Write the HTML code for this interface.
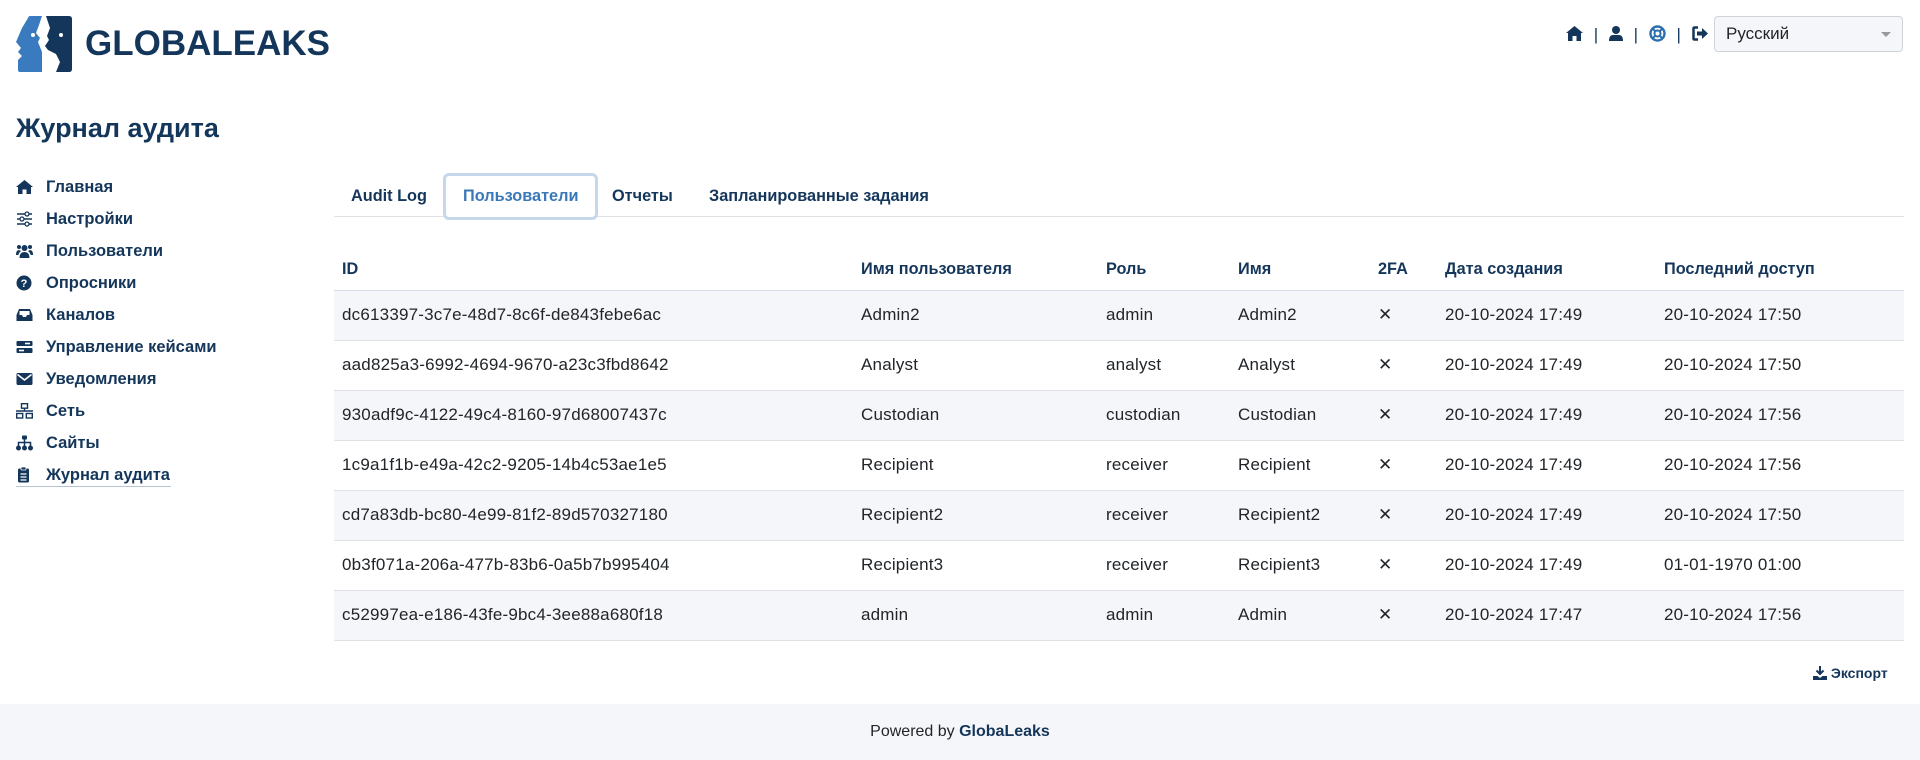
<!DOCTYPE html>
<html><head><meta charset="utf-8">
<style>
*{box-sizing:border-box;margin:0;padding:0}
body{width:1920px;height:760px;overflow:hidden;background:#fff;font-family:"Liberation Sans",sans-serif;color:#212529;position:relative}
.abs{position:absolute}
.navy{color:#14365a}
.side div{position:absolute;left:16px;height:32px;line-height:32px;font-weight:bold;font-size:16.5px;color:#14365a;white-space:nowrap}
.side svg{position:absolute;left:0;top:8px;width:17px;height:16px}
.side span{position:absolute;left:30px}
.tab{position:absolute;top:184px;font-weight:bold;font-size:16.3px;color:#14365a;line-height:24px}
table{position:absolute;left:334px;top:250px;width:1570px;border-collapse:collapse;font-size:17px;letter-spacing:.2px}
td,th{height:50px;padding:0 8px;text-align:left;vertical-align:middle;border-bottom:1px solid #dee2e6;white-space:nowrap}
th{height:40px;font-weight:bold;color:#14365a;border-bottom:1px solid #d5dde8;vertical-align:middle;font-size:16.3px;letter-spacing:0}
tr.g td{background:#f5f6fa}
</style></head><body>
<svg class="abs" style="left:16px;top:16px" width="56" height="56" viewBox="0 0 56 56">
<path d="M12,2 Q12,0 15,0 L26,0 L23,9 L20,17 L24,22 L22,26 L26,36 L26,56 L4,56 Q2,56 2,54 L2,44 L6,40 L2,36 L5,32 L0,26 L6,12 Z" fill="#3a7bbf"/>
<circle cx="17" cy="19" r="2" fill="#fff"/>
<path d="M30,0 L53,0 Q56,0 56,3 L56,53 Q56,56 53,56 L40,56 L44,46 L40,38 L32,34 L29,30 L33,24 L31,20 L34,12 Z" fill="#14365a"/>
<circle cx="45" cy="19" r="2" fill="#fff"/>
</svg>
<div class="abs" style="left:85px;top:23px;font-size:35px;font-weight:bold;color:#14365a;line-height:42px">GLOBALEAKS</div>

<div class="abs navy" style="left:1566px;top:24px;font-size:17px;line-height:22px;white-space:nowrap">
<svg width="17" height="15" viewBox="0 0 17 15" style="vertical-align:-1px"><path d="M8.5,0 L17,7 L15,7 L15,15 L10.5,15 L10.5,10 L6.5,10 L6.5,15 L2,15 L2,7 L0,7 Z" fill="#14365a"/></svg>
<span style="margin:0 6px">|</span>
<svg width="14" height="15" viewBox="0 0 14 15" style="vertical-align:-1px"><circle cx="7" cy="4" r="4" fill="#14365a"/><path d="M0,15 Q0,9 4,9 L10,9 Q14,9 14,15 Z" fill="#14365a"/></svg>
<span style="margin:0 6px">|</span>
<svg width="17" height="17" viewBox="0 0 17 17" style="vertical-align:-2px"><circle cx="8.5" cy="8.5" r="7" fill="none" stroke="#2c6fae" stroke-width="2.4"/><circle cx="8.5" cy="8.5" r="3" fill="none" stroke="#2c6fae" stroke-width="2"/><path d="M3.5,3.5 L6.5,6.5 M13.5,3.5 L10.5,6.5 M3.5,13.5 L6.5,10.5 M13.5,13.5 L10.5,10.5" stroke="#2c6fae" stroke-width="2"/></svg>
<span style="margin:0 6px">|</span>
<svg width="17" height="15" viewBox="0 0 17 15" style="vertical-align:-1px"><path d="M6,1.5 L2.5,1.5 Q1.5,1.5 1.5,2.5 L1.5,12.5 Q1.5,13.5 2.5,13.5 L6,13.5" fill="none" stroke="#14365a" stroke-width="2.5"/><path d="M5,5.5 L10,5.5 L10,2 L16,7.5 L10,13 L10,9.5 L5,9.5 Z" fill="#14365a"/></svg>
</div>
<div class="abs" style="left:1714px;top:16px;width:189px;height:36px;border:1px solid #ced4da;border-radius:4px;background:#f5f6fa;font-size:17px;line-height:34px;padding-left:11px;color:#212529">Русский
<div class="abs" style="right:11px;top:15px;width:0;height:0;border-left:5px solid transparent;border-right:5px solid transparent;border-top:5px solid #999"></div></div>

<div class="abs navy" style="left:16px;top:111px;font-size:27px;font-weight:bold;line-height:34px">Журнал аудита</div>

<div class="side">
<div style="top:171px"><svg viewBox="0 0 17 16"><path d="M8.5,1 L17,8 L15,8 L15,15 L10.5,15 L10.5,10.5 L6.5,10.5 L6.5,15 L2,15 L2,8 L0,8 Z" fill="#14365a"/></svg><span>Главная</span></div>
<div style="top:203px"><svg viewBox="0 0 17 16"><path d="M1,3H16M1,8H16M1,13H16" stroke="#14365a" stroke-width="1.5"/><circle cx="11" cy="3" r="2" fill="#fff" stroke="#14365a" stroke-width="1.3"/><circle cx="6" cy="8" r="2" fill="#fff" stroke="#14365a" stroke-width="1.3"/><circle cx="11" cy="13" r="2" fill="#fff" stroke="#14365a" stroke-width="1.3"/></svg><span>Настройки</span></div>
<div style="top:235px"><svg viewBox="0 0 17 16"><circle cx="8.5" cy="5" r="3" fill="#14365a"/><circle cx="3" cy="4" r="2" fill="#14365a"/><circle cx="14" cy="4" r="2" fill="#14365a"/><path d="M3.5,15 Q3.5,9 8.5,9 Q13.5,9 13.5,15Z M0,12 Q0,7 3,7 L5,8 Q2.5,10 2.5,12Z M17,12 Q17,7 14,7 L12,8 Q14.5,10 14.5,12Z" fill="#14365a"/></svg><span>Пользователи</span></div>
<div style="top:267px"><svg viewBox="0 0 17 16"><circle cx="8" cy="8" r="7.5" fill="#14365a"/><text x="8" y="12" font-size="11" font-weight="bold" fill="#fff" text-anchor="middle" font-family="Liberation Sans">?</text></svg><span>Опросники</span></div>
<div style="top:299px"><svg viewBox="0 0 17 16"><path d="M3,2 L14,2 L16.5,8 L16.5,14 L0.5,14 L0.5,8 Z" fill="#14365a"/><path d="M3.5,8 L3.5,4 L13.5,4 L13.5,8 L11,8 L10,10 L7,10 L6,8 Z" fill="#fff"/></svg><span>Каналов</span></div>
<div style="top:331px"><svg viewBox="0 0 17 16"><rect x="0.5" y="2" width="16" height="5" rx="1" fill="#14365a"/><rect x="0.5" y="9" width="16" height="5" rx="1" fill="#14365a"/><rect x="9" y="3.7" width="5" height="1.6" fill="#fff"/><rect x="3" y="10.7" width="5" height="1.6" fill="#fff"/></svg><span>Управление кейсами</span></div>
<div style="top:363px"><svg viewBox="0 0 17 16"><rect x="0.5" y="2" width="16" height="12" rx="1.5" fill="#14365a"/><path d="M1.5,3.5 L8.5,9 L15.5,3.5" fill="none" stroke="#fff" stroke-width="1.6"/></svg><span>Уведомления</span></div>
<div style="top:395px"><svg viewBox="0 0 17 16"><rect x="5.5" y="0.7" width="6" height="4.5" fill="none" stroke="#14365a" stroke-width="1.4"/><rect x="0.7" y="10.5" width="6" height="4.5" fill="none" stroke="#14365a" stroke-width="1.4"/><rect x="10.3" y="10.5" width="6" height="4.5" fill="none" stroke="#14365a" stroke-width="1.4"/><path d="M8.5,5 V8 M0,8 H17" stroke="#14365a" stroke-width="1.4"/></svg><span>Сеть</span></div>
<div style="top:427px"><svg viewBox="0 0 17 16"><rect x="6" y="0.5" width="5" height="4" rx="1" fill="#14365a"/><path d="M8.5,4 V11 M2.5,11 V7.5 H14.5 V11" fill="none" stroke="#14365a" stroke-width="1.5"/><circle cx="2.5" cy="13" r="2.5" fill="#14365a"/><circle cx="8.5" cy="13" r="2.5" fill="#14365a"/><circle cx="14.5" cy="13" r="2.5" fill="#14365a"/></svg><span>Сайты</span></div>
<div style="top:459px"><svg viewBox="0 0 17 16" style="left:1px"><rect x="1" y="1.5" width="11" height="14" rx="1.5" fill="#14365a"/><rect x="4" y="0" width="5" height="3" rx="1" fill="#14365a" stroke="#fff" stroke-width=".8"/><path d="M3.5,7H9.5M3.5,10H9.5M3.5,13H9.5" stroke="#fff" stroke-width="1.2"/></svg><span>Журнал аудита</span></div>
</div>
<div class="abs" style="left:16px;top:486px;width:155px;height:1px;background:#b9c4d2"></div>

<div class="abs" style="left:334px;top:216px;width:1570px;height:1px;background:#dee2e6"></div>
<div class="abs" style="left:443px;top:173px;width:155px;height:47px;border:3px solid #c5d7ea;border-radius:6px;background:#fff"></div>
<div class="tab" style="left:351px">Audit Log</div>
<div class="tab" style="left:463px;color:#3a78b8">Пользователи</div>
<div class="tab" style="left:612px">Отчеты</div>
<div class="tab" style="left:709px">Запланированные задания</div>

<table>
<colgroup><col style="width:519px"><col style="width:245px"><col style="width:132px"><col style="width:140px"><col style="width:67px"><col style="width:219px"><col></colgroup>
<tr><th>ID</th><th>Имя пользователя</th><th>Роль</th><th>Имя</th><th>2FA</th><th>Дата создания</th><th>Последний доступ</th></tr>
<tr class="g"><td>dc613397-3c7e-48d7-8c6f-de843febe6ac</td><td>Admin2</td><td>admin</td><td>Admin2</td><td>✕</td><td>20-10-2024 17:49</td><td>20-10-2024 17:50</td></tr>
<tr><td>aad825a3-6992-4694-9670-a23c3fbd8642</td><td>Analyst</td><td>analyst</td><td>Analyst</td><td>✕</td><td>20-10-2024 17:49</td><td>20-10-2024 17:50</td></tr>
<tr class="g"><td>930adf9c-4122-49c4-8160-97d68007437c</td><td>Custodian</td><td>custodian</td><td>Custodian</td><td>✕</td><td>20-10-2024 17:49</td><td>20-10-2024 17:56</td></tr>
<tr><td>1c9a1f1b-e49a-42c2-9205-14b4c53ae1e5</td><td>Recipient</td><td>receiver</td><td>Recipient</td><td>✕</td><td>20-10-2024 17:49</td><td>20-10-2024 17:56</td></tr>
<tr class="g"><td>cd7a83db-bc80-4e99-81f2-89d570327180</td><td>Recipient2</td><td>receiver</td><td>Recipient2</td><td>✕</td><td>20-10-2024 17:49</td><td>20-10-2024 17:50</td></tr>
<tr><td>0b3f071a-206a-477b-83b6-0a5b7b995404</td><td>Recipient3</td><td>receiver</td><td>Recipient3</td><td>✕</td><td>20-10-2024 17:49</td><td>01-01-1970 01:00</td></tr>
<tr class="g"><td>c52997ea-e186-43fe-9bc4-3ee88a680f18</td><td>admin</td><td>admin</td><td>Admin</td><td>✕</td><td>20-10-2024 17:47</td><td>20-10-2024 17:56</td></tr>
</table>

<div class="abs navy" style="left:1813px;top:664px;font-size:14px;font-weight:bold;line-height:18px;white-space:nowrap">
<svg width="14" height="14" viewBox="0 0 14 14" style="vertical-align:-2px"><path d="M7,0 V8 M3.5,4.5 L7,8 L10.5,4.5" fill="none" stroke="#14365a" stroke-width="2"/><path d="M0,10 H4.5 L7,12 L9.5,10 H14 V14 H0Z" fill="#14365a"/></svg> Экспорт</div>

<div class="abs" style="left:0;top:704px;width:1920px;height:56px;background:#f5f6fa;text-align:center;font-size:16px;line-height:56px;color:#212529">Powered by <b style="color:#14365a">GlobaLeaks</b></div>
</body></html>
